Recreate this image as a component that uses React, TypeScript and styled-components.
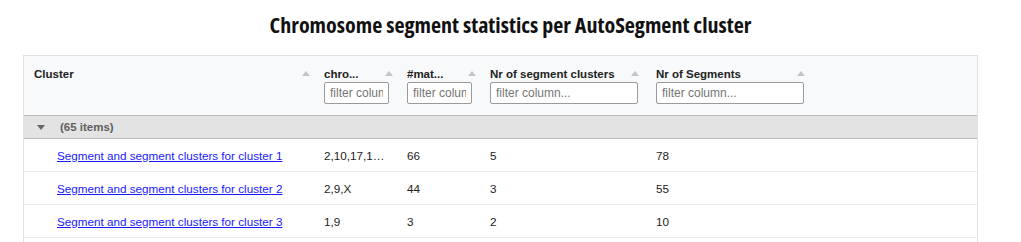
import React from "react";
import styled, { createGlobalStyle } from "styled-components";

const GlobalStyle = createGlobalStyle`
	body {
		margin: 0;
		background: #ffffff;
		font-family: "Liberation Sans", Arial, sans-serif;
	}
`;

const Page = styled.div`
	width: 1021px;
	height: 242px;
	overflow: hidden;
`;

const Title = styled.h1`
	margin: 0;
	padding-top: 12px;
	height: 55px;
	box-sizing: border-box;
	text-align: center;
	font-family: "Open Sans", "DejaVu Sans Condensed", sans-serif;
	font-stretch: 75%;
	font-size: 22px;
	line-height: 24px;
	font-weight: 700;
	color: #111;
`;

const Table = styled.div`
	margin-left: 23px;
	width: 953px;
	border: 1px solid #e2e2e2;
	border-bottom: none;
`;

const COLS = "293px 83px 83px 166px 167px 1fr";

const HeaderRow = styled.div`
	display: grid;
	grid-template-columns: ${COLS};
	height: 59px;
	background: #f8f9fa;
`;

const HeaderCell = styled.div<{ pad?: number }>`
	position: relative;
	padding: 11px 0 0 ${(p) => p.pad ?? 7}px;
`;

const HeaderLabel = styled.div`
	font-size: 11.5px;
	font-weight: 700;
	color: #222;
	height: 14px;
	line-height: 14px;
	white-space: nowrap;
`;

const SortArrow = styled.span<{ right: number }>`
	position: absolute;
	top: 15px;
	right: ${(p) => p.right}px;
	width: 0;
	height: 0;
	border-left: 4px solid transparent;
	border-right: 4px solid transparent;
	border-bottom: 5px solid #c4c4c4;
`;

const FilterInput = styled.input<{ w: number }>`
	display: block;
	box-sizing: border-box;
	margin-top: 1px;
	width: ${(p) => p.w}px;
	height: 22px;
	padding: 0 5px;
	border: 1px solid #9a9a9a;
	border-radius: 2px;
	font-family: "Liberation Sans", Arial, sans-serif;
	font-size: 12px;
	color: #333;
	background: #fff;
	&::placeholder {
		color: #757575;
	}
`;

const GroupRow = styled.div`
	display: flex;
	align-items: center;
	height: 22px;
	background: #e3e3e3;
	border-top: 1px solid #b9b9b9;
	border-bottom: 1px solid #b9b9b9;
	padding-left: 13px;
	font-size: 11.5px;
	font-weight: 700;
	color: #5e5e5e;
`;

const Caret = styled.span`
	width: 0;
	height: 0;
	border-left: 4px solid transparent;
	border-right: 4px solid transparent;
	border-top: 5px solid #666;
	margin-right: 15px;
`;

const DataRow = styled.div`
	display: grid;
	grid-template-columns: ${COLS};
	height: 32px;
	border-bottom: 1px solid #ebebeb;
	align-items: center;
	font-size: 11.7px;
	color: #222;
`;

const DataCell = styled.div<{ pad?: number }>`
	padding-left: ${(p) => p.pad ?? 7}px;
	white-space: nowrap;
	overflow: hidden;
`;

const ClusterLink = styled.a`
	color: #1a1aff;
	text-decoration: underline;
`;

const columns = [
	{ label: "Cluster", filter: 0, arrow: 7, pad: 10 },
	{ label: "chro...", filter: 65, arrow: 7 },
	{ label: "#mat...", filter: 65, arrow: 7 },
	{ label: "Nr of segment clusters", filter: 148, arrow: 10 },
	{ label: "Nr of Segments", filter: 148, arrow: 11 },
];

const rows = [
	{ id: 1, chro: "2,10,17,1…", mat: 66, clusters: 5, segments: 78 },
	{ id: 2, chro: "2,9,X", mat: 44, clusters: 3, segments: 55 },
	{ id: 3, chro: "1,9", mat: 3, clusters: 2, segments: 10 },
	{ id: 4, chro: "", mat: "", clusters: "", segments: "" },
];

export default function App() {
	return (
		<Page>
			<GlobalStyle />
			<Title>Chromosome segment statistics per AutoSegment cluster</Title>
			<Table>
				<HeaderRow>
					{columns.map((c) => (
						<HeaderCell key={c.label} pad={c.pad}>
							<HeaderLabel>{c.label}</HeaderLabel>
							<SortArrow right={c.arrow} />
							{c.filter > 0 && (
								<FilterInput w={c.filter} placeholder="filter column..." />
							)}
						</HeaderCell>
					))}
					<div />
				</HeaderRow>
				<GroupRow>
					<Caret />
					(65 items)
				</GroupRow>
				{rows.map((r) => (
					<DataRow key={r.id}>
						<DataCell pad={33}>
							{r.chro !== "" && (
								<ClusterLink href="#">
									Segment and segment clusters for cluster {r.id}
								</ClusterLink>
							)}
						</DataCell>
						<DataCell>{r.chro}</DataCell>
						<DataCell>{r.mat}</DataCell>
						<DataCell>{r.clusters}</DataCell>
						<DataCell>{r.segments}</DataCell>
						<div />
					</DataRow>
				))}
			</Table>
		</Page>
	);
}
